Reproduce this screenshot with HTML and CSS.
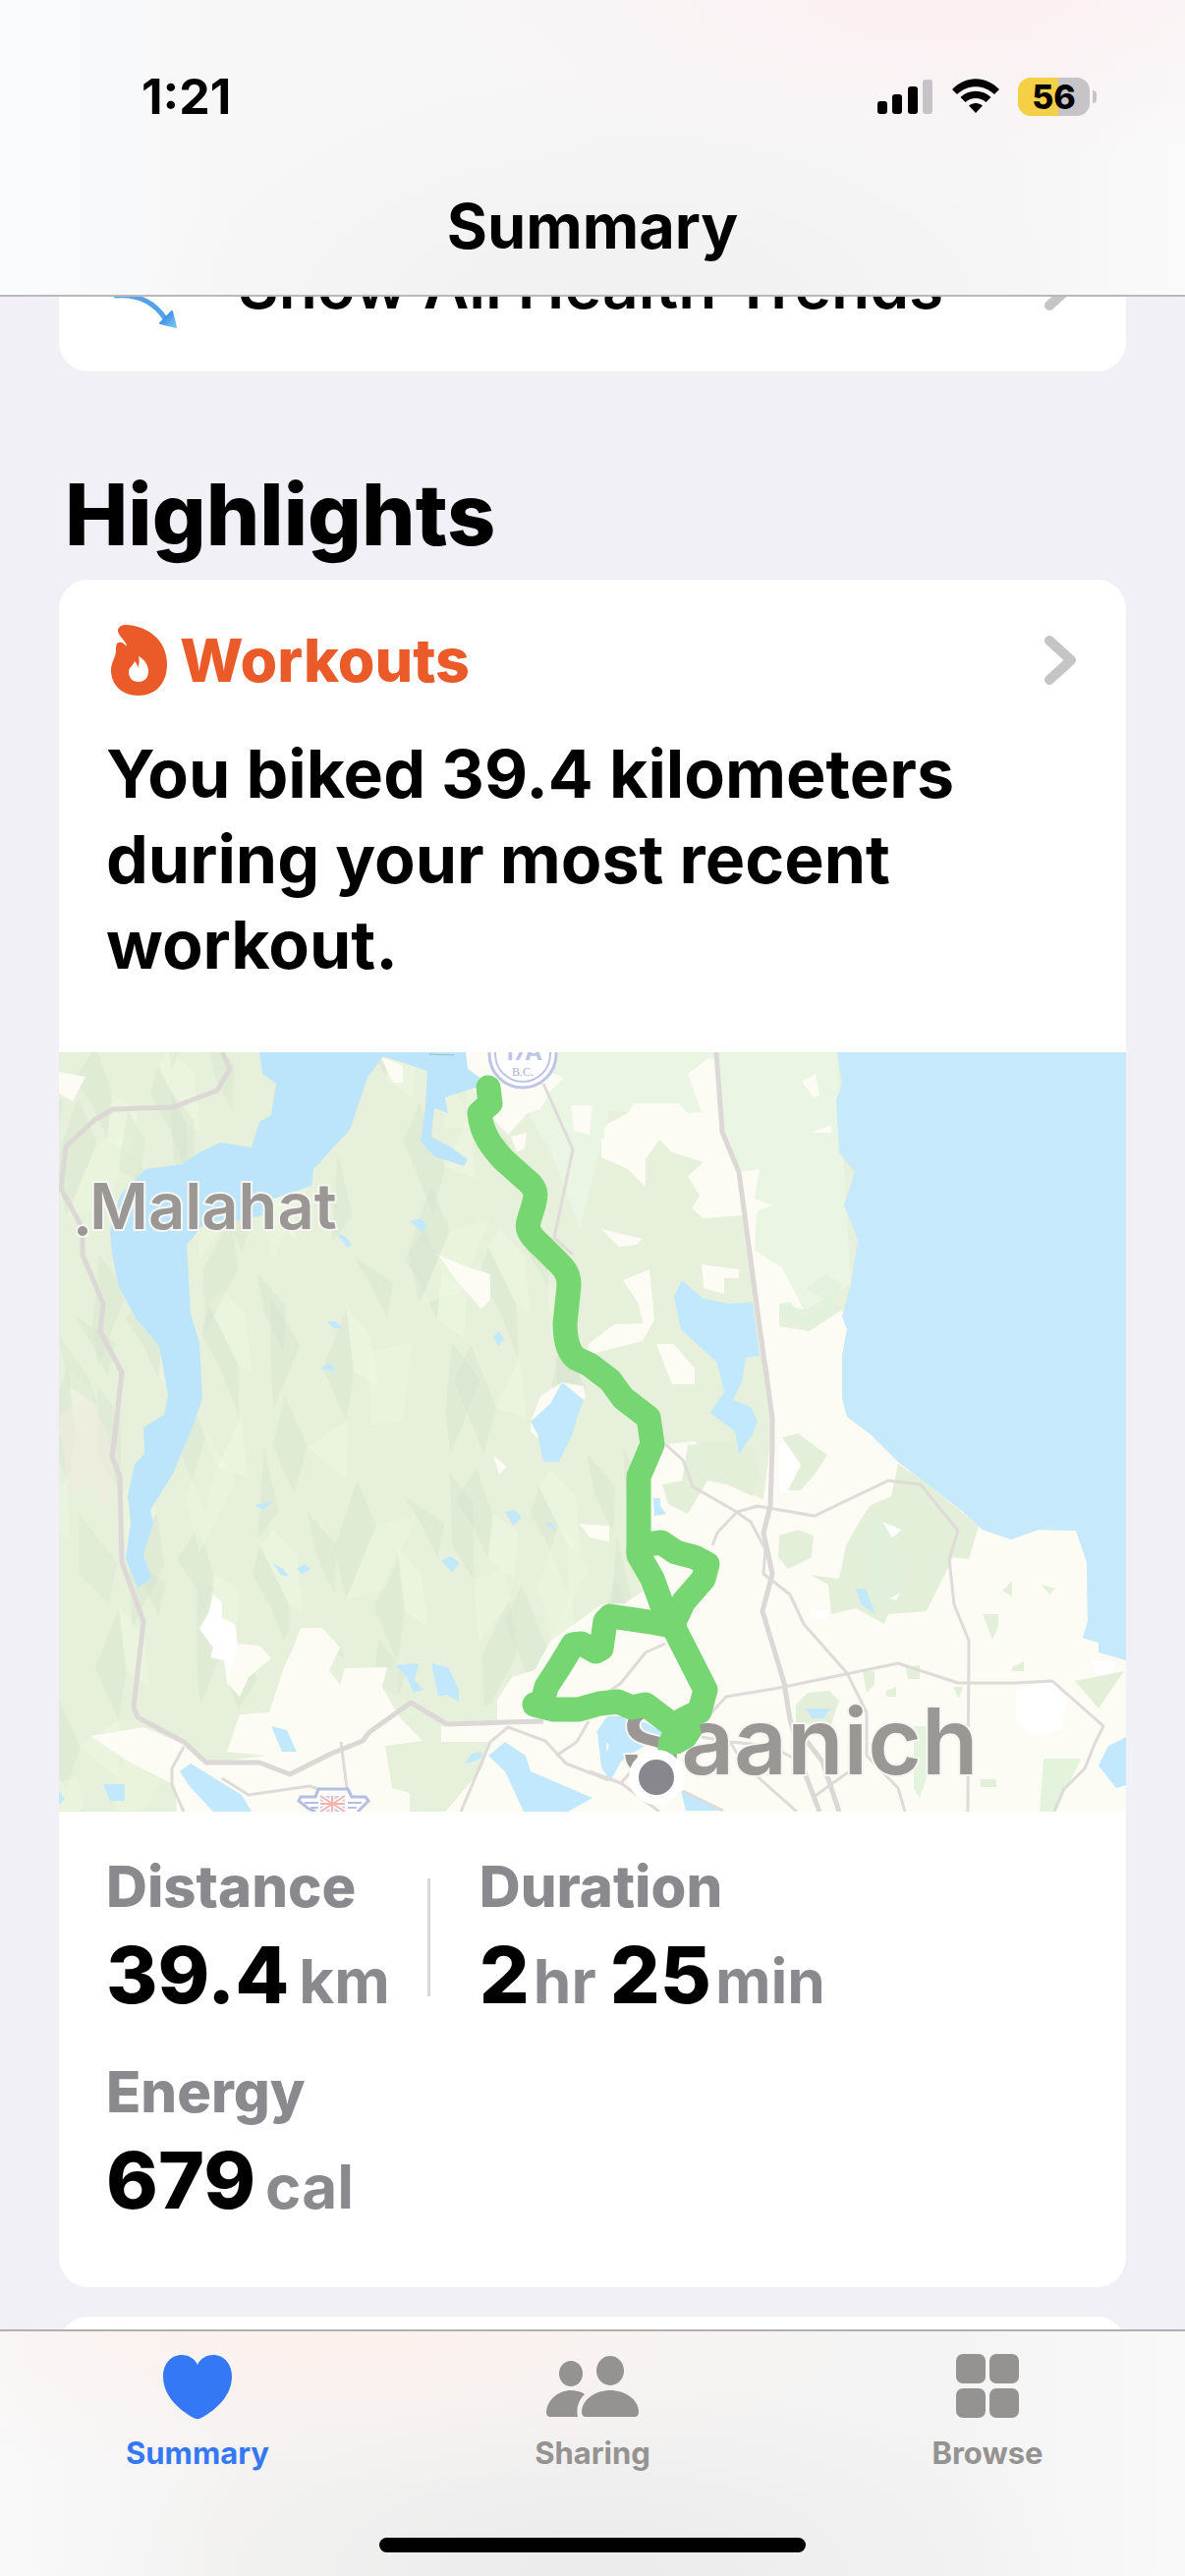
FILE: index.html
```html
<!DOCTYPE html>
<html lang="en">
<head>
  <meta charset="UTF-8" />
  <meta name="viewport" content="width=device-width, initial-scale=1.0"/>
  <title>Health Summary</title>
  <link rel="stylesheet" href="styles.css">
</head>
<body>
  <header class="top-bar">
    <div class="status">
      <span class="time">1:21</span>
      <div class="status-icons">
        <svg width="57" height="35" viewBox="0 0 57 35" aria-label="Signal">
          <rect x="0" y="22" width="10" height="13" rx="3"/>
          <rect x="15" y="15" width="10" height="20" rx="3"/>
          <rect x="31" y="7" width="10" height="28" rx="3"/>
          <rect x="46" y="0" width="10" height="35" rx="3" fill="#c6c4c6"/>
        </svg>
        <svg width="48" height="36" viewBox="0 0 48 36" aria-label="Wi-Fi">
          <path d="M0 11C14-3.500 34-3.500 48 11L43 16C32 5.500 16 5.500 5 16Z"/>
          <path d="M8.500 19C17 10.500 31 10.500 39.500 19L34.500 24C28.500 18.500 19.500 18.500 13.500 24Z"/>
          <path d="M17 27.500C21 24 27 24 31 27.500L24 35Z"/>
        </svg>
        <div class="battery">
          <span class="battery-level">56</span>
          <span class="battery-tip"></span>
        </div>
      </div>
    </div>
    <h1 class="title">Summary</h1>
  </header>

  <main class="content">
    <a href="#trends" class="card trends">
      <svg class="trend-icon" width="78" height="90" viewBox="0 0 78 90">
        <defs>
          <linearGradient id="trend" x1="0" y1="0" x2="1" y2="1">
            <stop offset="0.300" stop-color="#3f8fea"/>
            <stop offset="1" stop-color="#7cc8f2"/>
          </linearGradient>
        </defs>
        <path d="M10 55C34 53 49 62 60 78" fill="none" stroke="#55a2ec" stroke-width="5" stroke-linecap="round"/>
        <path d="M67 71L71 87L55 83Z" fill="url(#trend)" stroke="url(#trend)" stroke-width="2" stroke-linejoin="round"/>
      </svg>
      <span class="trends-text">Show All Health Trends</span>
      <svg class="chevron" width="34" height="52" viewBox="0 0 34 52"><path d="M6 6L28 26L6 46"/></svg>
    </a>

    <h2 class="section-title">Highlights</h2>

    <section class="card">
      <a href="#workouts" class="card-head">
        <svg width="58" height="72" viewBox="0 0 58 72">
          <path fill="#eb5a29" fill-rule="evenodd" d="M8 3C9 1 12 0 15 0C38 1 57 16 57 40C57 60 45 72 28 72C11 72 0 61 0 46C0 38 5 33 5 26C5 23 5 18 8 18C11 17 13 19 16 22C16 17 7 11 7 6C7 5 7 4 8 3ZM28 32C29 36 29 40 27 44C27 41 26 39 24 37C23 41 18 43 18 48C18 54 22 58 28 58C34 58 38 54 38 47C38 41 34 35 28 32Z"/>
        </svg>
        <span class="card-name">Workouts</span>
        <svg class="chevron" width="34" height="52" viewBox="0 0 34 52"><path d="M6 6L28 26L6 46"/></svg>
      </a>
      <p class="headline">You biked 39.4 kilometers during your most recent workout.</p>

      <svg class="map" viewBox="0 0 1086 773" role="img" aria-label="Route map">
        <defs>
          <!-- hill facets, two layers so the repeat does not line up -->
          <pattern id="hills" width="290" height="250" patternUnits="userSpaceOnUse" patternTransform="rotate(-12)">
            <g fill="#d3dfca" opacity="0.320">
              <path d="M10 30L38 2L44 52L30 96L22 60Z"/>
              <path d="M82 60L96 34L112 98L102 152L94 100Z"/>
              <path d="M150 10L172 50L160 96L150 56Z"/>
              <path d="M196 120L232 66L226 130L208 178Z"/>
              <path d="M250 16L284 50L270 84L262 50Z"/>
              <path d="M34 160L58 128L70 196L48 240Z"/>
              <path d="M130 186L152 140L164 196L140 238Z"/>
            </g>
            <g fill="#f3fae4" opacity="0.400">
              <path d="M44 52L66 74L52 120L30 96Z"/>
              <path d="M112 20L130 50L124 110L112 98L96 34Z"/>
              <path d="M232 66L250 96L246 150L226 130Z"/>
              <path d="M70 196L104 152L98 214Z"/>
              <path d="M164 196L208 178L196 236Z"/>
            </g>
          </pattern>
          <pattern id="ridges" width="370" height="310" patternUnits="userSpaceOnUse" patternTransform="rotate(14)">
            <g fill="#d0dcc8" opacity="0.300">
              <path d="M30 40L60 80L48 160L24 110Z"/>
              <path d="M120 10L150 34L170 110L140 80Z"/>
              <path d="M210 120L230 170L214 240L196 180Z"/>
              <path d="M300 30L330 90L316 120Z"/>
              <path d="M90 190L126 220L116 300L100 260Z"/>
              <path d="M270 190L310 230L300 300L284 250Z"/>
            </g>
            <g fill="#eff8e0" opacity="0.450">
              <path d="M60 80L96 60L84 140L48 160Z"/>
              <path d="M170 110L196 90L210 120L190 170Z"/>
              <path d="M240 30L280 70L262 150L236 100Z"/>
              <path d="M10 220L50 200L60 280L30 290Z"/>
            </g>
          </pattern>
        </defs>
        <rect width="1086" height="773" fill="#e6f0db"/>
        <path fill="url(#hills)" d="M0 0H414L470 120L530 330L590 430V560L480 640L389 690L240 580L150 720L80 773H0Z"/>
        <path fill="url(#ridges)" d="M0 0H414L470 120L530 330L590 430V560L480 640L389 690L240 580L150 720L80 773H0Z"/>
        <path fill="#ebf5e4" d="M440 0H792L806 236L760 262L708 202L690 120L640 60L560 60L530 180L500 100Z"/>
        <path fill="#efebde" opacity="0.700" d="M0 370L30 350L50 390L56 430L46 470L36 440L10 450Z"/>
        <path fill="#dce8d3" opacity="0.500" d="M70 60L88 90L80 130L60 120ZM0 290L30 330L40 360L10 340ZM20 470L60 520L50 560L20 530ZM140 540L158 545L140 580Z"/>

        <!-- open land -->
        <g fill="#fcfbf4">
          <path d="M32 696L86 687L127 704L150 724L211 716L171 712L184 674L214 672L229 626L237 609L246 586H268L286 606L275 629L286 644L291 627L334 626L329 646L346 676L370 701L332 706L339 749L357 754V773H120L118 746L71 722Z"/>
          <path d="M733 279L763 284L797 262L802 282L797 309V352L802 371L826 389L854 417L879 436L919 467L940 486L969 496L997 486L1035 487L1046 519L1047 579L1042 596L1058 601L1086 619V773H393L430 730L439 702H389V686L446 680V659L461 636L484 629L500 600L552 562L576 561L606 540V512L590 430L617 399L647 396L683 436L717 456L726 379L719 256Z"/>
          <path d="M579 62L585 52H631L640 62L654 61L640 22L661 6L672 8L676 82L692 122L713 119L708 149L726 156L710 162L708 202L736 219L758 262L733 256V279L726 339L719 309L704 222L697 166L656 169L644 159L652 146L640 126L656 112L624 102L611 89L597 109V137L579 119L552 107L556 74Z"/>
          <path d="M414 0H450L514 26L500 40L490 58L477 62L457 84L441 67L421 37L437 32L416 17Z"/>
          <path d="M386 206L411 217L439 226V252L430 261L407 236Z"/>
          <path d="M327 4L350 14V31H340Z"/>
          <path d="M0 20L27 25L14 50L0 42Z"/>
          <path d="M521 54H543L540 84L524 80ZM552 88L564 92V106L552 104ZM460 86L476 82L474 98L466 102Z"/>
          <path d="M574 232L601 221L606 272L594 294L547 306L530 320L540 296L565 277L594 276L590 256Z"/>
          <path d="M608 297H626L647 322V338H624Z"/>
          <path d="M654 216L692 221V230H677V246L656 240Z"/>
          <path d="M552 180L594 190L588 196L570 198ZM756 30L770 22L774 44L768 46ZM764 82L786 74V82Z"/>
          <path d="M480 376L490 350L512 336L534 340L536 352L500 380L490 396L480 386ZM442 410L456 422L448 430ZM530 480L560 482V498L540 494Z"/>
          <path fill="#fff" d="M157 552L166 560V576L179 582L182 602L176 640L171 642L168 619L154 616L157 606L143 587L152 571Z"/>
          <path d="M182 602L204 604L216 617L193 636L184 656L171 642Z"/>
          <path fill="#fff" d="M733 400L750 394L755 420L744 448H733ZM974 648L1012 640L1026 660L1020 690L990 696L974 680ZM764 566L784 568L782 578L766 576ZM1050 620H1076L1070 636L1054 632Z"/>
        </g>

        <!-- parks -->
        <g fill="#e4efd9">
          <path d="M854 419L879 436L936 482L926 516L910 514L883 569L844 572L840 582L811 566L786 572L783 542L765 532L794 536L801 502L817 474L826 461L847 452Z"/>
          <path d="M733 492L752 486L768 492L766 514L742 526L732 514Z"/>
          <path d="M736 392L752 388L782 410L770 428L755 446H742L755 420Z"/>
          <path d="M750 664L762 652L784 650L794 660L786 684H750Z"/>
          <path d="M640 400L670 396L706 400L712 430L706 452L680 440L660 436L640 470L620 460L614 440L634 436Z"/>
          <path d="M940 572H956V584L950 598ZM960 548L970 538V554ZM1000 542L1014 546L1008 552ZM970 626L982 620V630H970ZM818 630H830V644L822 652ZM862 626L876 624V638H864ZM842 650L852 646V656H842ZM910 646H920L916 658ZM938 740H954V748H938ZM1034 640L1084 630L1058 668Z"/>
          <path fill="#e3f3dc" d="M870 686H886V730L876 759L870 750ZM1002 719H1040L1030 740L1014 773H998Z"/>
          <path fill="#dff1dc" opacity="0.700" d="M733 256L744 254L758 270L790 252L797 236L780 226L760 240L797 262L763 284L757 276L733 268ZM826 470L850 480L860 560L826 560Z"/>
        </g>
        <path fill="#fff" d="M838 478L858 486L848 494ZM846 556L856 550L852 558Z"/>

        <!-- water -->
        <g fill="#c1e8fd">
          <path fill="#bce5fc" d="M204 0L207 22L221 32L216 64L204 71L196 97L164 92L143 102L125 114L88 119L62 146L52 182L54 206L61 239L79 272L102 299L111 349L107 369L86 382L87 409L77 419L70 452L73 479L68 516L80 545L95 536L86 512L96 479L93 466L116 429L137 379L146 352L143 296L134 266L130 196L150 172L186 171L207 166L210 152L257 136L259 119L296 79L314 26L330 4L375 19L373 56L368 91L382 106L412 116L416 109L398 96L379 86L382 57L396 62L393 46L421 37L437 32L416 17L414 0Z"/>
          <path fill="#c6e9fc" d="M792 0L797 32L791 49L794 102L810 122L799 156L813 191L806 236L797 269L802 282L797 309V352L802 371L826 389L854 417L879 436L919 467L940 486L969 496L997 486L1035 487L1046 519L1047 579L1042 596L1058 601V611L1086 619V0Z"/>
          <path d="M634 232L656 251L683 256L706 254L713 309L699 311L695 336L686 354L704 361L711 376L706 389L692 409L688 386L663 367L677 346L670 316L633 282L626 249Z"/>
          <path d="M512 336L534 354L527 372L522 390L509 417H493L487 389L480 376L500 358Z"/>
          <path d="M123 732L134 724L186 756L196 773H157L132 746Z"/>
          <path d="M437 716L454 702L475 716L480 732L543 759L518 773H473L454 732Z"/>
          <path d="M547 692L558 676H583L612 690L622 700L600 704L586 712L572 722L561 742L552 728L560 706Z"/>
          <path d="M633 752L650 758L676 772H638Z"/>
          <path d="M216 686L232 690L242 712H227Z"/>
          <path d="M343 624L366 622L362 639L371 649L361 652L354 636ZM379 622L396 626L407 648V661L394 654L386 656Z"/>
          <path d="M357 172L368 169L375 176L370 183ZM283 184L292 188L298 196L293 199ZM273 274L282 274L289 281H280ZM266 323L275 316L282 324ZM442 290L447 284L453 292L447 299ZM199 461L217 457L208 466ZM218 520L228 526L234 534L226 532ZM242 526L250 521L256 526L248 531ZM389 518L398 513L408 520L400 529ZM454 468L464 466L471 474L462 482ZM495 479L502 479L506 488ZM45 745H67V762H52Z"/>
          <path d="M605 454H612V462L618 470L606 472ZM811 546H821L831 572L816 562ZM760 668H786L778 678H766ZM1086 697L1068 706L1058 726L1076 749L1086 746ZM0 752L6 760L0 766Z"/>
          <path d="M413 724L420 714L430 712V718L422 722ZM548 692L556 690L558 716L552 728Z"/>
        </g>
        <path d="M377 2L402 3" stroke="#9fb9bd" stroke-width="1" fill="none"/>

        <!-- roads -->
        <g fill="none" stroke="#dedbd8" stroke-width="3" stroke-linejoin="round">
          <path d="M617 399L635 415L645 442L688 467L704 478L719 506L717 531L744 552L758 582L802 632L822 672V716L854 749L861 773"/>
          <path d="M665 502L670 489L690 468L711 462L769 472L844 436L877 440L915 487L906 516L911 562L926 599L925 773"/>
          <path d="M655 682L679 656L733 647L854 622L915 642H972L1011 640L1063 686L1054 704L1044 729L1022 751L1013 773"/>
          <path d="M617 602L597 611L572 642L558 652"/>
          <path d="M654 697L683 702L697 725L751 773M683 702L724 706L754 722M768 758L810 728"/>
          <path d="M540 732L572 744L611 773M572 744L584 730M635 752L676 772"/>
          <path d="M493 32L523 99L504 189L523 206"/>
          <path d="M409 773L439 702L457 687L495 701L516 724L560 741M539 681L527 702L506 716"/>
          <path d="M127 707L115 729V746L127 773M166 739L193 756L255 747L270 752M287 702L293 749"/>
        </g>
        <g fill="none" stroke="#dbd8d6" stroke-width="5" stroke-linejoin="round">
          <path d="M166 0L174 17L161 39L116 56L55 58L36 69L7 96L2 139L24 179V206L45 256L42 284L64 326L57 389L54 412L62 432L64 519L86 579L76 666L80 677L127 702L150 723H204L235 735L277 714L309 701L316 692L358 662L395 684L454 682L493 681"/>
          <path d="M669 0L675 81L692 122L701 189L713 279L726 372V400L724 462L717 489L726 531L716 569L738 642L744 679L760 736L774 773M754 692L777 722L794 773"/>
        </g>

        <!-- highway shields -->
        <circle cx="472" cy="2" r="34" fill="#fff" stroke="#bfc5e6" stroke-width="3"/>
        <circle cx="472" cy="2" r="28" fill="#fff" stroke="#bfc5e6" stroke-width="2"/>
        <text x="472" y="8" class="shield-number">17A</text>
        <text x="472" y="24" class="shield-region">B.C.</text>
        <path d="M261 773L254 770L244 762L246 758H261L264 750H294L298 758H312L315 762L304 773" fill="#fff" stroke="#b4bfe2" stroke-width="3"/>
        <path d="M250 764H264M256 769H264M294 764H308M294 769H303" stroke="#b4bfe2" stroke-width="2"/>
        <rect x="266" y="757" width="25" height="16" fill="#c9cde9"/>
        <path d="M266 757L291 773M291 757L266 773M278 757V773M266 765H291" stroke="#fff" stroke-width="5"/>
        <path d="M266 757L291 773M291 757L266 773M278 757V773M266 765H291" stroke="#f5b3ab" stroke-width="2"/>

        <circle cx="24" cy="182" r="6" fill="#9b9794" stroke="#f6f6f2" stroke-width="2"/>
        <text x="31" y="180" class="place">Malahat</text>
        <text x="572" y="735" class="place place-large">Saanich</text>

        <!-- route -->
        <g fill="none" stroke="#76d672" stroke-width="25" stroke-linecap="round" stroke-linejoin="round">
          <path d="M437 36L439 52L428 62C430 84 442 98 452 109L480 134C487 142 485 148 483 156L478 172C475 182 482 189 493 199L510 216C518 224 519 230 519 238L515 276C515 290 518 306 527 312L540 318L561 334L574 352L600 372L604 399L590 432V512L604 536L617 572L626 586L658 649L652 671L634 680L622 704"/>
          <path d="M590 508L597 501L613 499L628 509L647 514L660 521L656 536L636 559L624 584L608 581L561 574L556 579L552 607L546 610L532 602L523 603L509 626L496 646L492 662L484 664L504 669L529 669L550 663L569 661L583 667L597 664L626 686"/>
        </g>
        <path d="M622 680L652 684L654 694L646 706L632 714L608 712L618 692Z" fill="#76d672"/>
        <circle cx="608" cy="738" r="23" fill="#88878d" stroke="#fff" stroke-width="10"/>
      </svg>

      <dl class="stats">
        <div class="stat">
          <dt>Distance</dt>
          <dd><span class="value">39.4</span><span class="unit spaced">km</span></dd>
        </div>
        <div class="divider"></div>
        <div class="stat">
          <dt>Duration</dt>
          <dd><span class="value">2</span><span class="unit">hr</span><span class="value spaced-more">25</span><span class="unit">min</span></dd>
        </div>
        <div class="stat stat-wide">
          <dt>Energy</dt>
          <dd><span class="value">679</span><span class="unit spaced">cal</span></dd>
        </div>
      </dl>
    </section>

    <section class="card next-card"></section>
  </main>

  <nav class="tab-bar">
    <div class="tabs">
      <a href="#summary" class="tab active">
        <svg width="70" height="70" viewBox="0 0 70 70"><path d="M35 12C38 5 45 2 51 2C62 2 70 11 70 24C70 42 56 57 38 66.500Q35 68 32 66.500C14 57 0 42 0 24C0 11 8 2 19 2C25 2 32 5 35 12Z"/></svg>
        <span>Summary</span>
      </a>
      <a href="#sharing" class="tab">
        <svg width="94" height="70" viewBox="0 0 94 70">
          <ellipse cx="25" cy="21" rx="12" ry="13"/>
          <ellipse cx="65" cy="18" rx="14" ry="15"/>
          <path d="M5 65C1 65 0 63 0 60C1 48 12 38 25 38C30 38 35 39 39 42C33 48 30 56 32 65Z"/>
          <path d="M41 65C37 65 36 63 36 59C37 47 50 38 65 38S93 47 94 59C94 63 93 65 89 65Z"/>
        </svg>
        <span>Sharing</span>
      </a>
      <a href="#browse" class="tab">
        <svg width="64" height="70" viewBox="0 0 64 70">
          <rect x="0" y="1" width="30" height="30" rx="7"/>
          <rect x="34" y="1" width="30" height="30" rx="7"/>
          <rect x="0" y="36" width="30" height="30" rx="7"/>
          <rect x="34" y="36" width="30" height="30" rx="7"/>
        </svg>
        <span>Browse</span>
      </a>
    </div>
    <div class="home-indicator"></div>
  </nav>
</body>
</html>
```

FILE: styles.css
```css
* {
  box-sizing: border-box;
}

body, html {
  margin: 0;
  padding: 0;
  height: 100%;
  font-family: Inter, "Liberation Sans", sans-serif;
  color: #000;
  background: #f1f0f6;
  overflow: hidden;
}

a {
  color: inherit;
  text-decoration: none;
}

svg {
  display: block;
  flex-shrink: 0;
}

/* status and title stay over the scrolling content */
.top-bar {
  position: fixed;
  top: 0;
  left: 0;
  right: 0;
  z-index: 10;
  padding: 70px 0 34px;
  background:
    radial-gradient(ellipse at 80% 0%, #fcf0f2 0%, rgba(252, 240, 242, 0) 40%),
    radial-gradient(ellipse at 52% 110%, #f0f0f1 0%, rgba(245, 245, 246, 0) 55%),
    linear-gradient(to right, #fafbfc, #f7f7f8 20%, #f7f6f7 85%, #fafafb);
  border-bottom: 2px solid #b9b9bc;
}

.status {
  display: flex;
  justify-content: space-between;
  align-items: center;
  height: 56px;
  padding: 0 90px 0 144px;
}

.time {
  font-size: 50px;
  line-height: 56px;
  font-weight: 700;
}

.status-icons {
  display: flex;
  align-items: center;
  gap: 19px;
}

.battery {
  display: flex;
  align-items: center;
  gap: 3px;
}

.battery-level {
  width: 73px;
  height: 39px;
  border-radius: 13px;
  background: linear-gradient(to right, #f5cf46 56%, #c6c4c6 56%);
  font-size: 34px;
  line-height: 39px;
  font-weight: 800;
  text-align: center;
}

.battery-tip {
  width: 4px;
  height: 13px;
  border-radius: 0 4px 4px 0;
  background: #c6c4c6;
}

.title {
  margin: 68px 0 0;
  font-size: 63px;
  line-height: 72px;
  font-weight: 700;
  text-align: center;
}

.content {
  height: 100%;
  padding: 204px 60px 0;
  overflow-y: auto;
  scrollbar-width: none;
}

.card {
  background: #fff;
  border-radius: 30px;
  overflow: hidden;
}

.trends {
  display: flex;
  align-items: center;
  height: 174px;
  padding: 0 50px 0 48px;
}

.trends-text {
  flex: 1;
  margin-left: 56px;
  font-size: 64px;
  line-height: 78px;
  font-weight: 600;
}

.chevron {
  margin-left: auto;
  fill: none;
  stroke: #c5c5c7;
  stroke-width: 10px;
  stroke-linecap: round;
  stroke-linejoin: round;
}

.section-title {
  margin: 97px 6px 17px;
  font-size: 86px;
  line-height: 98px;
  font-weight: 800;
}

.card-head {
  display: flex;
  align-items: center;
  gap: 12px;
  padding: 46px 50px 0 53px;
}

.card-name {
  font-size: 61px;
  line-height: 72px;
  font-weight: 800;
  color: #eb5a29;
}

.headline {
  margin: 36px 48px 66px;
  font-size: 68px;
  line-height: 87px;
  font-weight: 700;
}

.map {
  width: 100%;
  height: auto;
}

.place {
  font-size: 65px;
  font-weight: 600;
  fill: #9b9794;
  stroke: #f6f6f2;
  stroke-width: 4px;
  paint-order: stroke;
}

.place-large {
  font-size: 94px;
}

.shield-number {
  font-size: 24px;
  font-weight: 700;
  fill: #bfc5e6;
  text-anchor: middle;
}

.shield-region {
  font-family: "Liberation Serif", serif;
  font-size: 12px;
  fill: #a9aed0;
  text-anchor: middle;
}

.stats {
  display: flex;
  flex-wrap: wrap;
  row-gap: 32px;
  margin: 0;
  padding: 43px 48px 55px;
}

.stat-wide {
  flex-basis: 100%;
}

.stat dt {
  font-size: 58px;
  line-height: 66px;
  font-weight: 800;
  color: #8a8a8e;
}

.stat dd {
  display: flex;
  align-items: baseline;
  margin: 10px 0 0;
  line-height: 94px;
}

.value {
  font-size: 80px;
  font-weight: 800;
}

.unit {
  margin-left: 4px;
  font-size: 62px;
  font-weight: 700;
  color: #8a8a8e;
}

.spaced {
  margin-left: 10px;
}

.spaced-more {
  margin-left: 14px;
}

.divider {
  width: 3px;
  height: 120px;
  margin: 25px 50px 25px 38px;
  background: #d9d9db;
}

.next-card {
  height: 240px;
  margin-top: 30px;
}

.tab-bar {
  position: fixed;
  left: 0;
  right: 0;
  bottom: 0;
  z-index: 10;
  padding: 22px 0 24px;
  background:
    radial-gradient(ellipse at 28% 0%, #fcf1ed 0%, rgba(252, 241, 237, 0) 45%),
    radial-gradient(ellipse at 50% 100%, #ebebeb 0%, rgba(240, 240, 240, 0) 60%),
    linear-gradient(to right, #f9f9fa, #f5f4f3 20%, #f4f4f4 80%, #f9f9f9);
  border-top: 2px solid #b0b0b3;
}

.tabs {
  display: flex;
}

.tab {
  flex: 1;
  display: flex;
  flex-direction: column;
  align-items: center;
  gap: 14px;
  color: #959391;
  font-size: 31px;
  line-height: 36px;
  font-weight: 700;
}

.tab svg {
  fill: currentColor;
}

.tab.active {
  color: #3578f6;
}

.home-indicator {
  width: 36%;
  height: 15px;
  margin: 68px auto 0;
  border-radius: 8px;
  background: #000;
}
```
